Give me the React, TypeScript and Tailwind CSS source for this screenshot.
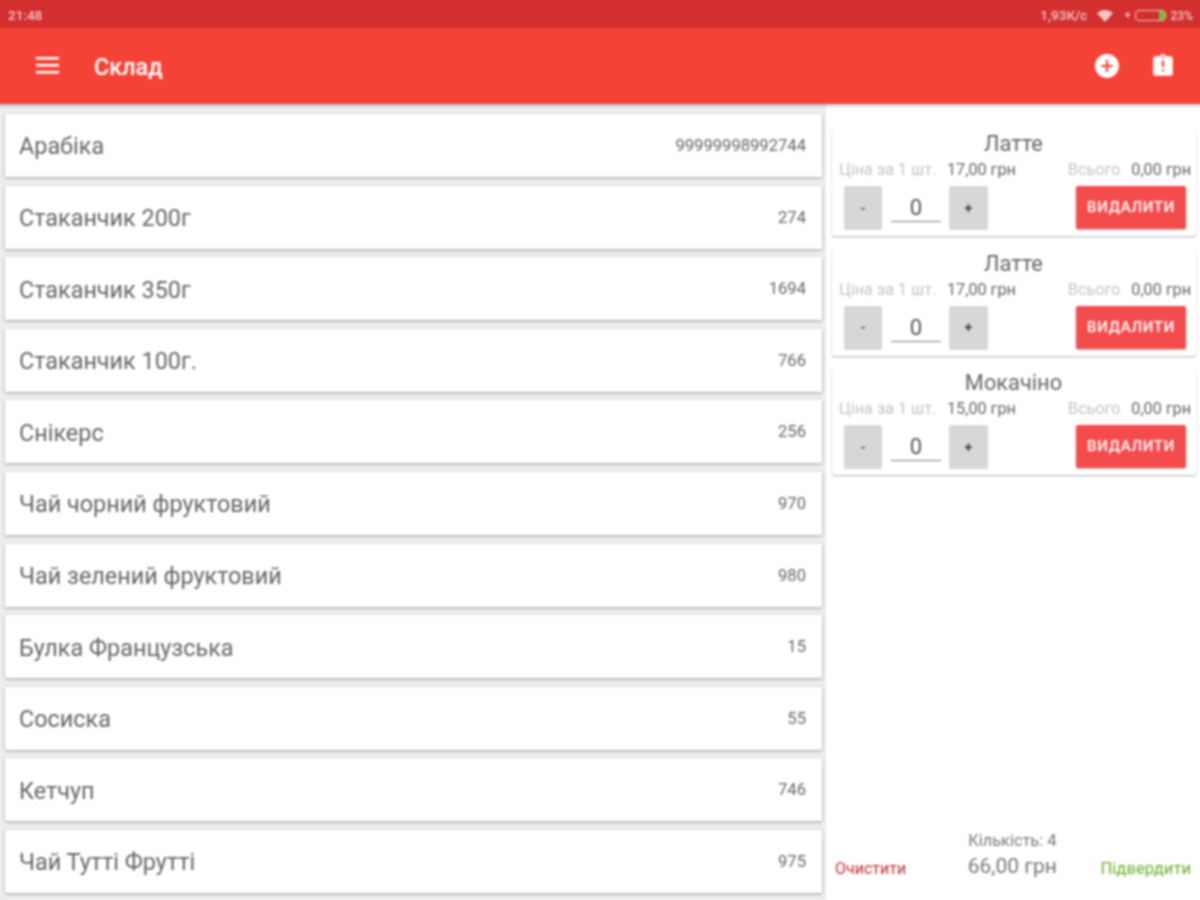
const items: [string, string][] = [
  ["Арабіка", "99999998992744"],
  ["Стаканчик 200г", "274"],
  ["Стаканчик 350г", "1694"],
  ["Стаканчик 100г.", "766"],
  ["Снікерс", "256"],
  ["Чай чорний фруктовий", "970"],
  ["Чай зелений фруктовий", "980"],
  ["Булка Французська", "15"],
  ["Сосиска", "55"],
  ["Кетчуп", "746"],
  ["Чай Тутті Фрутті", "975"],
];
const cart: [string, string][] = [
  ["Латте", "17,00 грн"],
  ["Латте", "17,00 грн"],
  ["Мокачіно", "15,00 грн"],
];

function CartCard({ name, price }: { name: string; price: string }) {
  return (
    <div className="h-[108px] bg-white rounded-[3px] shadow-[0_1px_2px_rgba(0,0,0,0.3)] flex flex-col pl-[7px] pr-[5px]">
      <div className="text-center text-[21.800px] leading-[24px] text-[#666] mt-[4px] pr-[3px]">{name}</div>
      <div className="flex items-center justify-between text-[16.200px] leading-[18px] mt-[5px]">
        <div className="flex">
          <span className="text-[#c4c4c4] w-[108px]">Ціна за 1 шт.</span>
          <span className="text-[#666]">{price}</span>
        </div>
        <div className="flex gap-[11px]">
          <span className="text-[#c4c4c4]">Всього</span>
          <span className="text-[#666]">0,00 грн</span>
        </div>
      </div>
      <div className="flex items-start mt-[7px] pl-[5px] pr-[5px]">
        <div className="w-[38px] h-[44px] bg-[#d6d7d7] rounded-[2px] flex items-center justify-center text-[15px] font-medium text-[#555]">-</div>
        <div className="w-[50px] h-[36px] ml-[9px] mr-[8px] border-b border-[#777] text-center text-[22px] leading-[43px] text-[#555]">0</div>
        <div className="w-[39px] h-[44px] bg-[#d6d7d7] rounded-[2px] flex items-center justify-center text-[15px] font-medium text-[#333]">+</div>
        <div className="ml-auto w-[110px] h-[43px] bg-[#f44c4c] rounded-[2px] shadow-[0_1px_2px_rgba(0,0,0,0.25)] flex items-center justify-center text-white text-[15px] font-medium tracking-[0.7px]">ВИДАЛИТИ</div>
      </div>
    </div>
  );
}

export default function App() {
  return (
    <div className="w-[1200px] h-[900px] overflow-hidden">
      <div className="w-[1208px] h-[908px] -mt-[4px] -ml-[4px] flex flex-col bg-[#eeeeee] blur-[0.8px] font-['Roboto',sans-serif]">
        <div className="h-[32px] shrink-0 bg-[#d32f2f] flex items-center justify-between pt-[7px] pl-[12px] pr-[11px] text-[13.500px] font-medium text-[#f3c4c4]">
          <span>21:48</span>
          <div className="flex items-center">
            <span>1,93К/с</span>
            <svg className="ml-[10px]" width="16" height="12" viewBox="0 0 24 18" fill="#f3c4c4">
              <path d="M12 18 0 5c7-6.500 17-6.500 24 0z" />
            </svg>
            <span className="ml-[11px] text-[11px]">+</span>
            <div className="ml-[4px] w-[31px] h-[11px] border border-[#f3c4c4] rounded-[4px] flex justify-end overflow-hidden">
              <div className="w-[6px] h-full bg-[#6dbf3b]" />
            </div>
            <span className="ml-[5px] text-[12px]">23%</span>
          </div>
        </div>
        <div className="h-[76px] shrink-0 bg-[#f44336] shadow-[0_2px_3px_rgba(0,0,0,0.2)] z-10 flex items-center pl-[40px] pr-[28px] text-white">
          <svg className="mb-[3px]" width="24" height="18" viewBox="0 0 24 18" fill="white">
            <rect y="1" width="23" height="2.500" />
            <rect y="8" width="23" height="2.500" />
            <rect y="15" width="23" height="2.500" />
          </svg>
          <span className="ml-[34px] mt-[4px] text-[23.400px] font-medium">Склад</span>
          <svg className="ml-auto" width="26" height="26" viewBox="0 0 24 24" fill="white">
            <path d="M12 1a11 11 0 1 0 0 22 11 11 0 0 0 0-22zm5.500 12H13v4.500h-2V13H6.500v-2H11V6.500h2V11h4.500z" />
          </svg>
          <svg className="ml-[30px]" width="26" height="26" viewBox="0 0 24 24" fill="white">
            <path d="M19 3h-4.200C14.400 1.800 13.300 1 12 1s-2.400.8-2.800 2H5a2 2 0 0 0-2 2v14a2 2 0 0 0 2 2h14a2 2 0 0 0 2-2V5a2 2 0 0 0-2-2zM12 3a1 1 0 1 1 0 2 1 1 0 0 1 0-2zm1 14h-2v-2h2zm0-4h-2V7h2z" />
          </svg>
        </div>
        <div className="flex-1 min-h-0 flex">
          <div className="w-[830px] shrink-0 flex flex-col gap-[8.6px] pt-[10px] pl-[9px] pr-[4px]">
            {items.map(([n, q], i) => (
              <div key={i} className="h-[63px] shrink-0 bg-white shadow-[0_1px_3px_rgba(0,0,0,0.35)] flex items-center justify-between pl-[14px] pr-[16px]">
                <span className="text-[23.400px] text-[#666] mt-[3px]">{n}</span>
                <span className="text-[16.600px] text-[#666] mt-[2px]">{q}</span>
              </div>
            ))}
          </div>
          <div className="flex-1 bg-white flex flex-col pl-[6px] pr-[8px]">
            <div className="flex flex-col gap-[11.600px] pt-[24px]">
              {cart.map(([n, p], i) => (
                <CartCard key={i} name={n} price={p} />
              ))}
            </div>
            <div className="mt-auto mb-[26px] flex items-end justify-between pl-[3px] pr-[5px]">
              <span className="text-[#c0303a] text-[16px] leading-[20px] -mb-[1px]">Очистити</span>
              <div className="flex flex-col items-center text-[#777] ml-[18px]">
                <span className="text-[16.400px] leading-[18px]">Кількість: 4</span>
                <span className="text-[21px] leading-[24px] mt-[4px]">66,00 грн</span>
              </div>
              <span className="text-[#6ab02c] text-[16.600px] leading-[20px] -mb-[1px]">Підвердити</span>
            </div>
          </div>
        </div>
      </div>
    </div>
  );
}
